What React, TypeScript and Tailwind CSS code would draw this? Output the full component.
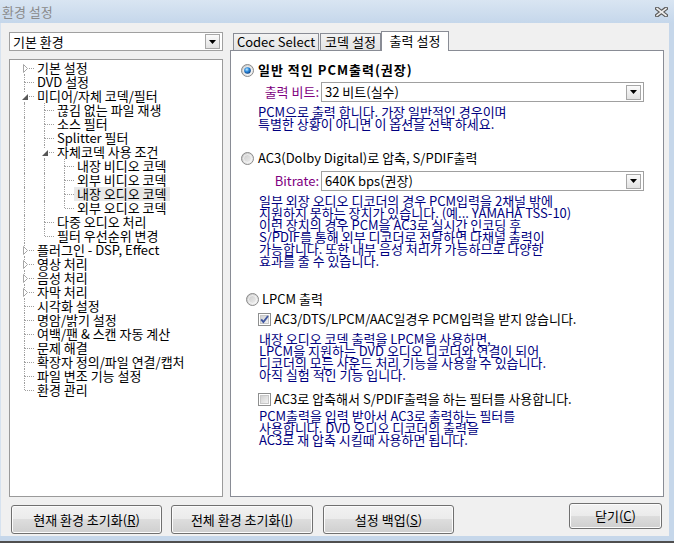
import { useId } from "react"

type Item = { label: string; level: number; exp?: "open" | "closed"; selected?: boolean }

const tree: Item[] = [
  { label: "기본 설정", level: 0, exp: "closed" },
  { label: "DVD 설정", level: 0 },
  { label: "미디어/자체 코덱/필터", level: 0, exp: "open" },
  { label: "끊김 없는 파일 재생", level: 1 },
  { label: "소스 필터", level: 1 },
  { label: "Splitter 필터", level: 1 },
  { label: "자체코덱 사용 조건", level: 1, exp: "open" },
  { label: "내장 비디오 코덱", level: 2 },
  { label: "외부 비디오 코덱", level: 2 },
  { label: "내장 오디오 코덱", level: 2, selected: true },
  { label: "외부 오디오 코덱", level: 2 },
  { label: "다중 오디오 처리", level: 1 },
  { label: "필터 우선순위 변경", level: 1 },
  { label: "플러그인 - DSP, Effect", level: 0, exp: "closed" },
  { label: "영상 처리", level: 0, exp: "closed" },
  { label: "음성 처리", level: 0, exp: "closed" },
  { label: "자막 처리", level: 0, exp: "closed" },
  { label: "시각화 설정", level: 0 },
  { label: "명암/밝기 설정", level: 0 },
  { label: "여백/팬 & 스캔 자동 계산", level: 0 },
  { label: "문제 해결", level: 0 },
  { label: "확장자 정의/파일 연결/캡처", level: 0 },
  { label: "파일 변조 기능 설정", level: 0 },
  { label: "환경 관리", level: 0 },
]

// true when a later row sits at `level` before the branch closes
function hasNext(i: number, level: number) {
  for (let j = i + 1; j < tree.length; j++) {
    if (tree[j].level < level) return false
    if (tree[j].level === level) return true
  }
  return false
}

function Guide({ on }: { on: boolean }) {
  return <div className={on ? "h-full w-[5px] border-r border-dotted border-[#a0a0a0]" : "h-full w-[5px]"} />
}

function TreeRow({ item, i }: { item: Item; i: number }) {
  const guides = []
  for (let k = 0; k < item.level; k++) {
    guides.push(
      <div key={k} className="h-[14px] w-[20px]">
        <Guide on={hasNext(i, k)} />
      </div>
    )
  }
  return (
    <div className="flex h-[14px]">
      {guides}
      <div className="relative h-[14px] w-[14px]">
        <div className="flex h-[7px]">
          <Guide on={i !== 0} />
        </div>
        <div className="flex h-[7px]">
          <Guide on={hasNext(i, item.level)} />
          <div className="flex-1 border-t border-dotted border-[#a0a0a0]" />
        </div>
        {item.exp === "closed" && (
          <svg className="absolute left-[2px] top-[3px] bg-white" width="7" height="9" viewBox="0 0 7 9">
            <path d="M1.5 0.5 L5.5 4.5 L1.5 8.5 Z" fill="#fff" stroke="#a6a6a6" />
          </svg>
        )}
        {item.exp === "open" && (
          <svg className="absolute left-[1px] top-[4px] bg-white" width="8" height="8" viewBox="0 0 8 8">
            <path d="M7 1 L7 7 L1 7 Z" fill="#575757" />
          </svg>
        )}
      </div>
      <span
        className={
          "whitespace-nowrap px-[3px] text-[13px] leading-[14px] text-black " + (item.selected ? "bg-[#e8e8e8]" : "")
        }
      >
        {item.label}
      </span>
    </div>
  )
}

function Combo({ value, className = "" }: { value: string; className?: string }) {
  return (
    <div className={"flex items-center border border-[#a0a0a0] bg-white " + className}>
      <span className="flex-1 whitespace-nowrap pl-[3px] text-[13px] leading-[14px] text-black">{value}</span>
      <span className="mr-[2px] flex h-[15px] w-[15px] items-center justify-center border border-[#a7a7a7] bg-gradient-to-b from-[#fbfbfb] to-[#e2e2e2]">
        <svg width="7" height="4" viewBox="0 0 7 4">
          <path d="M0 0h7L3.5 4z" fill="#000" />
        </svg>
      </span>
    </div>
  )
}

function Radio({ checked }: { checked?: boolean }) {
  const id = useId()
  return (
    <svg width="13" height="13" viewBox="0 0 13 13" className="shrink-0">
      <defs>
        <linearGradient id={id + "r"} x1="0" y1="0" x2="1" y2="1">
          <stop offset="0" stopColor="#c4c4c4" />
          <stop offset="1" stopColor="#f7f7f7" />
        </linearGradient>
        <radialGradient id={id + "d"} cx="0.4" cy="0.35" r="0.7">
          <stop offset="0" stopColor="#c6ecff" />
          <stop offset="0.45" stopColor="#2f8ee0" />
          <stop offset="1" stopColor="#0b3b7d" />
        </radialGradient>
      </defs>
      <circle cx="6.5" cy="6.5" r="6" fill={"url(#" + id + "r)"} stroke="#8a8a8a" />
      <circle cx="6.5" cy="6.5" r="4" fill="none" stroke="#fdfdfd" strokeOpacity="0.6" />
      {checked && <circle cx="6.5" cy="6.5" r="3.3" fill={"url(#" + id + "d)"} />}
    </svg>
  )
}

function Check({ checked }: { checked?: boolean }) {
  const id = useId()
  return (
    <svg width="13" height="13" viewBox="0 0 13 13" className="shrink-0">
      <defs>
        <linearGradient id={id} x1="0" y1="0" x2="1" y2="1">
          <stop offset="0" stopColor="#cfcfcf" />
          <stop offset="1" stopColor="#f4f4f4" />
        </linearGradient>
      </defs>
      <rect x="0.5" y="0.5" width="12" height="12" fill="#fff" stroke="#8e8f8f" />
      <rect x="2.5" y="2.5" width="8" height="8" fill={"url(#" + id + ")"} stroke="#c8c8c8" />
      {checked && <path d="M3.2 6.3 L5.4 9 L10 3" fill="none" stroke="#3f56a0" strokeWidth="1.9" />}
    </svg>
  )
}

function Btn({ children, className = "" }: { children: React.ReactNode; className?: string }) {
  return (
    <div
      className={
        "flex items-center justify-center rounded-[3px] border border-[#707070] bg-[linear-gradient(#f2f2f2_0%,#ebebeb_50%,#dddddd_50%,#cfcfcf_100%)] text-[13px] leading-[14px] text-black shadow-[inset_0_0_0_1px_#fcfcfc] " +
        className
      }
    >
      {children}
    </div>
  )
}

function Notes({ lines, className = "" }: { lines: string[]; className?: string }) {
  return (
    <div className={"text-[13px] leading-[12px] text-[#000080] " + className}>
      {lines.map((l) => (
        <div key={l} className="whitespace-nowrap">
          {l}
        </div>
      ))}
    </div>
  )
}

export default function App() {
  return (
    <div className="flex h-[543px] w-[674px] flex-col overflow-hidden bg-[#f0f0f0] font-['Noto_Sans_CJK_KR',sans-serif]">
      {/* title bar */}
      <div className="flex h-[23px] shrink-0 items-center justify-between bg-gradient-to-b from-[#d9e5f2] to-[#c5d7eb] pl-[2px] pr-[6px]">
        <span className="text-[13px] leading-[14px] text-[#8a8a8a]">환경 설정</span>
        <svg width="13" height="10" viewBox="0 0 13 10">
          <path d="M2 1.5 L11 8.5 M11 1.5 L2 8.5" stroke="#5a5a5a" strokeWidth="4" strokeLinecap="square" />
          <path d="M2 1.5 L11 8.5 M11 1.5 L2 8.5" stroke="#eeeeee" strokeWidth="1.6" strokeLinecap="square" />
        </svg>
      </div>

      <div className="flex h-[513px] shrink-0">
        <div className="w-[1px] bg-[#d6e2ef]" />
        <div className="flex w-[668px] flex-col">
          <div className="flex pl-[8px] pt-[8px]">
            {/* left column */}
            <div className="flex w-[214px] flex-col pt-[1px]">
              <Combo value="기본 환경" className="h-[19px]" />
              <div className="mt-[8px] h-[438px] border border-[#9a9a9a] bg-white pl-[10px] pt-[1px]">
                {tree.map((it, i) => (
                  <TreeRow key={it.label} item={it} i={i} />
                ))}
              </div>
            </div>

            {/* right column */}
            <div className="ml-[7px] flex w-[434px] flex-col">
              <div className="flex h-[19px] items-end pl-[3px] text-[13px] leading-[14px] text-black">
                <div className="flex h-[17px] w-[86px] items-center justify-center border border-b-0 border-[#898c95] bg-gradient-to-b from-[#f3f3f3] to-[#e3e3e3]">
                  Codec Select
                </div>
                <div className="ml-[1px] flex h-[17px] w-[61px] items-center justify-center border border-b-0 border-[#898c95] bg-gradient-to-b from-[#f3f3f3] to-[#e3e3e3]">
                  코덱 설정
                </div>
                <div className="relative z-10 -mb-[1px] flex h-[20px] w-[68px] items-center justify-center border border-b-0 border-[#898c95] bg-white pb-[2px]">
                  출력 설정
                </div>
              </div>

              <div className="flex h-[447px] flex-col border border-[#898c95] bg-white text-[13px] leading-[14px] text-black">
                <div className="ml-[10px] mt-[12px] flex h-[14px] items-center gap-[4px]">
                  <Radio checked />
                  <span className="font-bold tracking-[1px]">일반 적인 PCM출력(권장)</span>
                </div>
                <div className="mt-[5px] flex h-[20px] items-center">
                  <span className="w-[88px] text-right text-[#800080]">출력 비트:</span>
                  <Combo value="32 비트(실수)" className="ml-[2px] h-[20px] w-[323px]" />
                </div>
                <Notes
                  className="ml-[27px] mt-[4px]"
                  lines={["PCM으로 출력 합니다. 가장 일반적인 경우이며", "특별한 상황이 아니면 이 옵션을 선택 하세요."]}
                />

                <div className="ml-[10px] mt-[21px] flex h-[14px] items-center gap-[4px]">
                  <Radio />
                  <span>AC3(Dolby Digital)로 압축, S/PDIF출력</span>
                </div>
                <div className="mt-[6px] flex h-[20px] items-center">
                  <span className="w-[88px] text-right text-[#800080]">Bitrate:</span>
                  <Combo value="640K bps(권장)" className="ml-[2px] h-[20px] w-[323px]" />
                </div>
                <Notes
                  className="ml-[28px] mt-[4px]"
                  lines={[
                    "일부 외장 오디오 디코더의 경우 PCM입력을 2채널 밖에",
                    "지원하지 못하는 장치가 있습니다. (예... YAMAHA TSS-10)",
                    "이런 장치의 경우 PCM을 AC3로 실시간 인코딩 후",
                    "S/PDIF를 통해 외부 디코더로 전달하면 다채널 출력이",
                    "가능합니다. 또한 내부 음성 처리가 가능하므로 다양한",
                    "효과를 줄 수 있습니다.",
                  ]}
                />

                <div className="ml-[15px] mt-[25px] flex h-[14px] items-center gap-[3px]">
                  <Radio />
                  <span>LPCM 출력</span>
                </div>
                <div className="ml-[27px] mt-[6px] flex h-[14px] items-center gap-[3px]">
                  <Check checked />
                  <span>AC3/DTS/LPCM/AAC일경우 PCM입력을 받지 않습니다.</span>
                </div>
                <Notes
                  className="ml-[28px] mt-[7px]"
                  lines={[
                    "내장 오디오 코덱 출력을 LPCM을 사용하면,",
                    "LPCM을 지원하는 DVD 오디오 디코더와 연결이 되어",
                    "디코더의 모든 사운드 처리 기능을 사용할 수 있습니다.",
                    "아직 실험 적인 기능 입니다.",
                  ]}
                />
                <div className="ml-[27px] mt-[11px] flex h-[14px] items-center gap-[3px]">
                  <Check />
                  <span>AC3로 압축해서 S/PDIF출력을 하는 필터를 사용합니다.</span>
                </div>
                <Notes
                  className="ml-[28px] mt-[4px]"
                  lines={[
                    "PCM출력을 입력 받아서 AC3로 출력하는 필터를",
                    "사용합니다. DVD 오디오 디코더의 출력을",
                    "AC3로 재 압축 시킬때 사용하면 됩니다.",
                  ]}
                />
              </div>
            </div>
          </div>

          {/* buttons */}
          <div className="flex items-start">
            <Btn className="ml-[10px] mt-[8px] h-[29px] w-[151px]">
              현재 환경 초기화(<span className="underline">R</span>)
            </Btn>
            <Btn className="ml-[9px] mt-[8px] h-[29px] w-[142px]">
              전체 환경 초기화(<span className="underline">I</span>)
            </Btn>
            <Btn className="ml-[10px] mt-[8px] h-[29px] w-[131px]">
              설정 백업(<span className="underline">S</span>)
            </Btn>
            <Btn className="ml-[115px] mt-[6px] h-[26px] w-[93px]">
              닫기(<span className="underline">C</span>)
            </Btn>
          </div>
        </div>
        <div className="w-[5px] bg-[#c6d7ea]" />
      </div>
      <div className="h-[5px] shrink-0 bg-[#c6d7ea]" />
      <div className="h-[2px] shrink-0 bg-[#4f4f4f]" />
    </div>
  )
}
